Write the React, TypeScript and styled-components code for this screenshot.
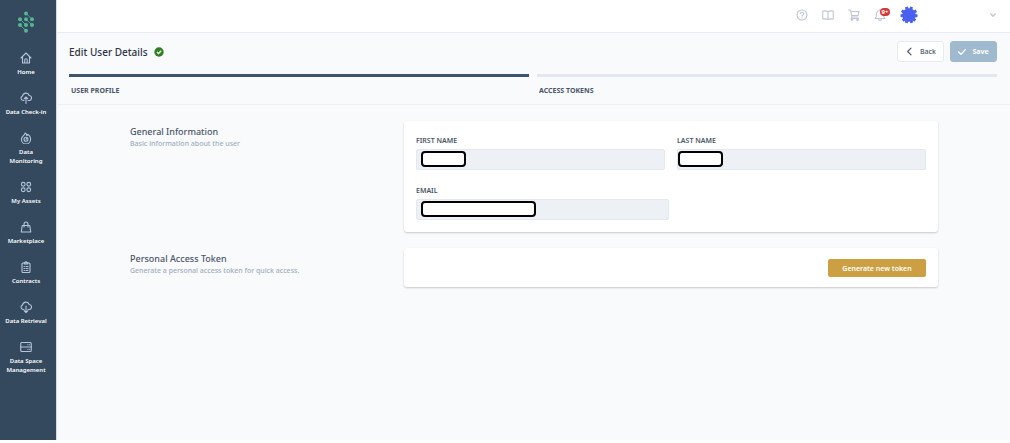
import React from "react";
import styled, { createGlobalStyle } from "styled-components";

const Global = createGlobalStyle`
  *, *::before, *::after { box-sizing: border-box; }
  body { margin: 0; background: #fff; color: #4a5568; font-family: "Noto Sans", "Open Sans", sans-serif; }
  button, input { font-family: inherit; margin: 0; }
  h1, h2, p { margin: 0; }
`;

const Shell = styled.div`
  display: flex;
  min-height: calc(100vh - 3px);
  background: #f9fafc;
`;
const Sidebar = styled.nav`
  flex: none;
  width: 57px;
  padding: 10px 4px 0 0;
  border-right: 1px solid #d3dde3;
  background: #34495e;
  display: flex;
  flex-direction: column;
  align-items: center;
`;
const NavList = styled.div`
  display: flex;
  flex-direction: column;
  gap: 15px;
  margin-top: 18px;
  width: 100%;
`;
const NavLink = styled.a`
  display: flex;
  flex-direction: column;
  align-items: center;
  gap: 4px;
  padding: 0 5px;
  color: #fff;
  font-size: 6px;
  font-weight: 600;
  line-height: 9px;
  text-align: center;
  text-decoration: none;
  svg { color: #b4c6d8; }
`;
const NavText = styled.span<{ $wrap?: boolean }>`
  width: ${(p) => (p.$wrap ? "min-content" : "auto")};
  white-space: ${(p) => (p.$wrap ? "normal" : "nowrap")};
`;
const Main = styled.div`
  flex: 1;
  min-width: 0;
`;
const TopBar = styled.header`
  display: flex;
  align-items: center;
  justify-content: flex-end;
  height: 33px;
  padding: 0 14px 2px 0;
  background: #fff;
  border-bottom: 1px solid #e8ecf2;
`;
const Tools = styled.div`
  display: flex;
  align-items: center;
  gap: 14px;
  margin-right: 72px;
`;
const IconButton = styled.button`
  position: relative;
  display: flex;
  padding: 0;
  border: 0;
  background: none;
  color: #bcc6d6;
`;
const Badge = styled.span`
  position: absolute;
  top: -1px;
  left: 6px;
  width: 10px;
  height: 8px;
  border-radius: 4px;
  background: #d0393b;
  color: #fff;
  font-size: 6px;
  font-weight: 700;
  line-height: 8px;
  text-align: center;
`;
const PageHead = styled.div`
  padding: 8px 13px 0 12px;
  border-bottom: 1px solid #eef0f4;
`;
const TitleRow = styled.div`
  display: flex;
  align-items: center;
  justify-content: space-between;
`;
const Title = styled.h1`
  display: flex;
  align-items: center;
  gap: 6px;
  color: #2c3444;
  font-size: 10px;
  font-weight: 500;
  line-height: 16px;
`;
const Actions = styled.div`
  display: flex;
  gap: 6px;
`;
const ActionButton = styled.button<{ $filled?: boolean }>`
  display: flex;
  align-items: center;
  justify-content: center;
  gap: 6px;
  width: 47px;
  height: 21px;
  padding: 0;
  border: 1px solid ${(p) => (p.$filled ? "#9fb9ce" : "#e6eaf1")};
  border-radius: 3px;
  background: ${(p) => (p.$filled ? "#9fb9ce" : "#fff")};
  color: ${(p) => (p.$filled ? "#fff" : "#4a5568")};
  font-size: 7px;
  font-weight: ${(p) => (p.$filled ? 700 : 500)};
`;
const Tabs = styled.div`
  display: grid;
  grid-template-columns: 1fr 1fr;
  gap: 8px;
  margin-top: 12px;
`;
const Tab = styled.button<{ $active?: boolean }>`
  padding: 8px 2px 7px;
  border: 0;
  border-top: 3px solid ${(p) => (p.$active ? "#3d566e" : "#e2e8ef")};
  background: none;
  color: #4a5568;
  font-size: 7px;
  font-weight: 700;
  line-height: 12px;
  text-align: left;
`;
const Content = styled.main`
  display: flex;
  flex-direction: column;
  gap: 16px;
  padding: 16px 72px 16px 73px;
`;
const Section = styled.section`
  display: grid;
  grid-template-columns: 266px 1fr;
  gap: 8px;
`;
const Intro = styled.div`
  padding-top: 5px;
`;
const Heading = styled.h2`
  color: #4a5568;
  font-size: 9px;
  font-weight: 500;
  line-height: 12px;
`;
const Hint = styled.p`
  color: #a0aec0;
  font-size: 7px;
  font-weight: 500;
  line-height: 12px;
`;
const Card = styled.div`
  padding: 12px;
  border-radius: 3px;
  background: #fff;
  box-shadow: 0 1px 2px rgba(0, 0, 0, 0.2);
`;
const Fields = styled.div`
  display: grid;
  grid-template-columns: 1fr 1fr;
  gap: 15px 12px;
  padding-top: 2px;
`;
const Field = styled.div<{ $wide?: boolean }>`
  position: relative;
  margin-right: ${(p) => (p.$wide ? "-4px" : "0")};
`;
const Label = styled.label`
  display: block;
  margin-bottom: 2px;
  color: #4a5568;
  font-size: 7px;
  font-weight: 600;
  line-height: 12px;
`;
const Input = styled.input`
  display: block;
  width: 100%;
  height: 21px;
  padding: 0 8px;
  border: 1px solid #e2e8f0;
  border-radius: 2px;
  background: #edf0f5;
  font-size: 8px;
`;
const Mask = styled.span<{ $width: number; $left: number }>`
  position: absolute;
  bottom: 3px;
  left: ${(p) => p.$left}px;
  width: ${(p) => p.$width}px;
  height: 16px;
  border: 2px solid #000;
  border-radius: 4px;
  background: #fff;
`;
const TokenCard = styled(Card)`
  display: flex;
  justify-content: flex-end;
  padding: 11px 12px 10px;
`;
const TokenButton = styled.button`
  width: 98px;
  height: 18px;
  padding: 0;
  border: 0;
  border-radius: 2px;
  background: #cb9f42;
  color: #fff;
  font-size: 7px;
  font-weight: 600;
`;

type IconProps = { size?: number; width?: number; children: React.ReactNode };
const Icon = ({ size = 12, width = 2.2, children }: IconProps) => (
  <svg width={size} height={size} viewBox="0 0 24 24" fill="none" stroke="currentColor" strokeWidth={width} strokeLinecap="round" strokeLinejoin="round" aria-hidden="true">
    {children}
  </svg>
);

const dots = [[9, 3.5], [3, 9.2], [9, 9.2], [15, 9.2], [3, 15], [9, 15], [15, 15], [9, 20.7]];
const Logo = () => (
  <svg width="18" height="24" viewBox="0 0 18 24" role="img" aria-label="Logo">
    <path d="M9 3.500L15 9.200M9 9.200L15 15M3 9.200L9 15M3 15L9 20.700" stroke="#4fb094" strokeWidth="0.900" fill="none" />
    {dots.map(([x, y]) => <circle key={`${x}-${y}`} cx={x} cy={y} r="2" fill="#53b795" />)}
  </svg>
);

const cloud = "M8 17H6.500A4.800 4.800 0 0 1 5 7.800A7 7 0 0 1 18.500 7A5 5 0 0 1 17.500 17H16";
const nav = [
  { label: "Home", art: <path d="M2 12L12 2L22 12M5 9V22H19V9M9.500 22V16A2.500 2.500 0 0 1 14.500 16V22" /> },
  { label: "Data Check-in", art: <><path d={cloud} /><path d="M12 23V10M8.500 13.500L12 10L15.500 13.500" /></> },
  { label: "Data Monitoring", wrap: true, art: <><path d="M10 2C13 3 13.500 5 13.500 7L16 5C20 8 22 11 21 15A9 9 0 0 1 3 15C2.500 11 5 9 7 7C9 6 10 4 10 2Z" /><circle cx="12" cy="14.500" r="4" /><path d="M12 14.500L14 12.500" /></> },
  { label: "My Assets", art: <><circle cx="6.500" cy="6.500" r="3.800" /><circle cx="17.500" cy="6.500" r="3.800" /><circle cx="6.500" cy="17.500" r="3.800" /><circle cx="17.500" cy="17.500" r="3.800" /></> },
  { label: "Marketplace", art: <path d="M4.500 9H19.500L21.500 22H2.500ZM8 12V7A4 5 0 0 1 16 7V12" /> },
  { label: "Contracts", art: <><rect x="4" y="4" width="16" height="19" rx="2" /><path d="M8.500 6V3H10.500A1.500 1.500 0 0 1 13.500 3H15.500V6ZM8 11H9M12 11H16M8 15H9M12 15H16M8 19H9M12 19H16" /></> },
  { label: "Data Retrieval", art: <><path d={cloud} /><path d="M12 10V23M8.500 19.500L12 23L15.500 19.500" /></> },
  { label: "Data Space Management", art: <><rect x="1.500" y="3" width="21" height="18" rx="2" /><path d="M1.500 12H22.500M15.500 7.500H16M19 7.500H19.200M15.500 16.500H16M19 16.500H19.200" /></>, wide: true },
];

const NavLabel = ({ text, wrap, wide }: { text: string; wrap?: boolean; wide?: boolean }) =>
  wide ? <NavText>Data Space<br />Management</NavText> : <NavText $wrap={wrap}>{text}</NavText>;

const Avatar = () => (
  <svg width="18" height="18" viewBox="0 0 18 18" fill="#4a60ee" role="img" aria-label="Account">
    <circle cx="9" cy="9" r="6.800" />
    {[18, 60, 96, 132, 160, 200, 228, 264, 300, 342].map((a) => (
      <rect key={a} x="7.500" y="0.500" width="3" height="4" rx="0.400" transform={`rotate(${a} 9 9)`} />
    ))}
  </svg>
);

export default function App() {
  return (
    <>
      <Global />
      <Shell>
        <Sidebar aria-label="Main">
          <Logo />
          <NavList>
            {nav.map((n) => (
              <NavLink href="#" key={n.label}>
                <Icon>{n.art}</Icon>
                <NavLabel text={n.label} wrap={n.wrap} wide={n.wide} />
              </NavLink>
            ))}
          </NavList>
        </Sidebar>
        <Main>
          <TopBar>
            <Tools>
              <IconButton aria-label="Help"><Icon><circle cx="12" cy="12" r="10" /><path d="M8.500 9.500A3.500 3 0 1 1 13 12.500Q12 13 12 14.500M12 17.500V18" /></Icon></IconButton>
              <IconButton aria-label="Documentation"><Icon><path d="M12 5Q7 3 1.500 4V20Q7 19 12 21Q17 19 22.500 20V4Q17 3 12 5V21" /></Icon></IconButton>
              <IconButton aria-label="Cart"><Icon><path d="M1 2H5L8 16H20M5.500 5H22L20 13H7.500M8 16L6 19H21" /><circle cx="8" cy="21.500" r="1.500" /><circle cx="19" cy="21.500" r="1.500" /></Icon></IconButton>
              <IconButton aria-label="Notifications"><Icon><path d="M2 19H22Q19 17 19 10A7 7 0 0 0 5 10Q5 17 2 19ZM9.500 21.500Q12 24 14.500 21.500M12 3V1" /></Icon><Badge>9+</Badge></IconButton>
              <Avatar />
            </Tools>
            <IconButton aria-label="Account menu"><Icon size={6} width={5}><path d="M3 8L12 17L21 8" /></Icon></IconButton>
          </TopBar>
          <PageHead>
            <TitleRow>
              <Title>
                Edit User Details
                <svg width="10" height="10" viewBox="0 0 10 10" aria-hidden="true"><circle cx="5" cy="5" r="4.700" fill="#2f8020" /><path d="M2.900 5L4.500 6.500L7.200 3.700" fill="none" stroke="#fff" strokeWidth="1.300" /></svg>
              </Title>
              <Actions>
                <ActionButton><Icon size={9} width={3}><path d="M16 3L7 12L16 21" /></Icon>Back</ActionButton>
                <ActionButton $filled><Icon size={8} width={4}><path d="M2 12L9 19L22 5" /></Icon>Save</ActionButton>
              </Actions>
            </TitleRow>
            <Tabs>
              <Tab $active>USER PROFILE</Tab>
              <Tab>ACCESS TOKENS</Tab>
            </Tabs>
          </PageHead>
          <Content>
            <Section>
              <Intro>
                <Heading>General Information</Heading>
                <Hint>Basic information about the user</Hint>
              </Intro>
              <Card>
                <Fields>
                  <Field><Label htmlFor="first">FIRST NAME</Label><Input id="first" readOnly /><Mask $left={5} $width={45} /></Field>
                  <Field><Label htmlFor="last">LAST NAME</Label><Input id="last" readOnly /><Mask $left={1} $width={45} /></Field>
                  <Field $wide><Label htmlFor="email">EMAIL</Label><Input id="email" readOnly /><Mask $left={5} $width={115} /></Field>
                </Fields>
              </Card>
            </Section>
            <Section>
              <Intro>
                <Heading>Personal Access Token</Heading>
                <Hint>Generate a personal access token for quick access.</Hint>
              </Intro>
              <TokenCard><TokenButton>Generate new token</TokenButton></TokenCard>
            </Section>
          </Content>
        </Main>
      </Shell>
    </>
  );
}
